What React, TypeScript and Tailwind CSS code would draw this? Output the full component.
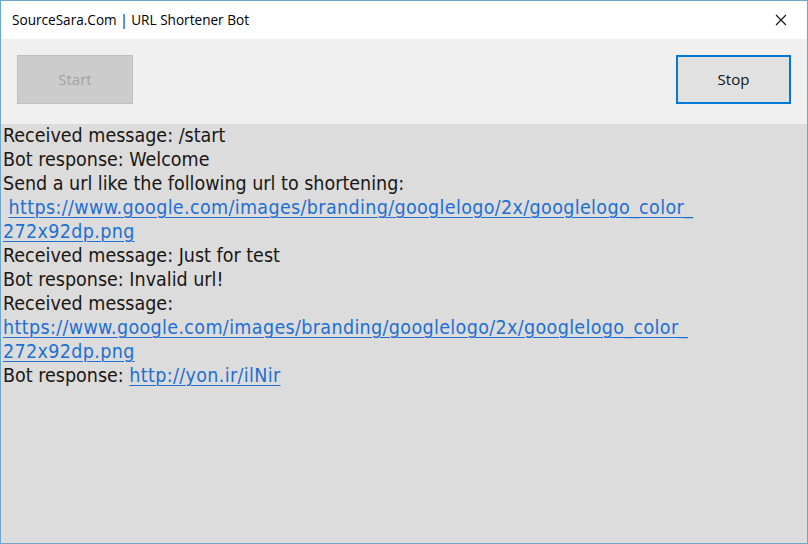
import React from "react";

const linkCls = "text-[#1d6fd3] underline decoration-1 underline-offset-[3px] tracking-[0.35px]";

export default function App() {
  return (
    <div className="w-[808px] h-[544px] flex flex-col border border-[#6ea6c7] bg-[#dcdcdc] overflow-hidden">
      <div className="h-[38px] bg-white flex items-center justify-between shrink-0">
        <span
          className="pl-[11px] text-[13.6px] text-black"
          style={{ fontFamily: '"Open Sans", "Noto Sans", sans-serif' }}
        >
          SourceSara.Com | URL Shortener Bot
        </span>
        <svg width="12" height="12" viewBox="0 0 12 12" className="mr-[20px]">
          <path d="M1 1 L11 11 M11 1 L1 11" stroke="#111" strokeWidth="1.1" />
        </svg>
      </div>
      <div className="h-[85px] bg-[#f0f0f0] flex items-start justify-between px-[16px] pt-[16px] shrink-0">
        <div
          className="w-[116px] h-[49px] bg-[#cccccc] border border-[#bfbfbf] flex items-center justify-center text-[#a3a3a3] text-[15px]"
          style={{ fontFamily: '"Open Sans", "Noto Sans", sans-serif' }}
        >
          Start
        </div>
        <div
          className="w-[115px] h-[49px] bg-[#e1e1e1] border-2 border-[#0078d7] flex items-center justify-center text-[#111] text-[15px]"
          style={{ fontFamily: '"Open Sans", "Noto Sans", sans-serif' }}
        >
          Stop
        </div>
      </div>
      <div
        className="flex-1 pl-[2px] pt-[0px] text-[19.5px] leading-[24px] text-[#1a1612]"
        style={{ fontFamily: '"DejaVu Sans Condensed", "DejaVu Sans", sans-serif' }}
      >
        <div>Received message: /start</div>
        <div>Bot response: Welcome</div>
        <div>Send a url like the following url to shortening:</div>
        <div>
          &nbsp;<span className={linkCls}>https://www.google.com/images/branding/googlelogo/2x/googlelogo_color_</span>
        </div>
        <div>
          <span className={linkCls}>272x92dp.png</span>
        </div>
        <div>Received message: Just for test</div>
        <div>Bot response: Invalid url!</div>
        <div>Received message:</div>
        <div>
          <span className={linkCls}>https://www.google.com/images/branding/googlelogo/2x/googlelogo_color_</span>
        </div>
        <div>
          <span className={linkCls}>272x92dp.png</span>
        </div>
        <div>
          Bot response: <span className={linkCls}>http://yon.ir/ilNir</span>
        </div>
      </div>
    </div>
  );
}
